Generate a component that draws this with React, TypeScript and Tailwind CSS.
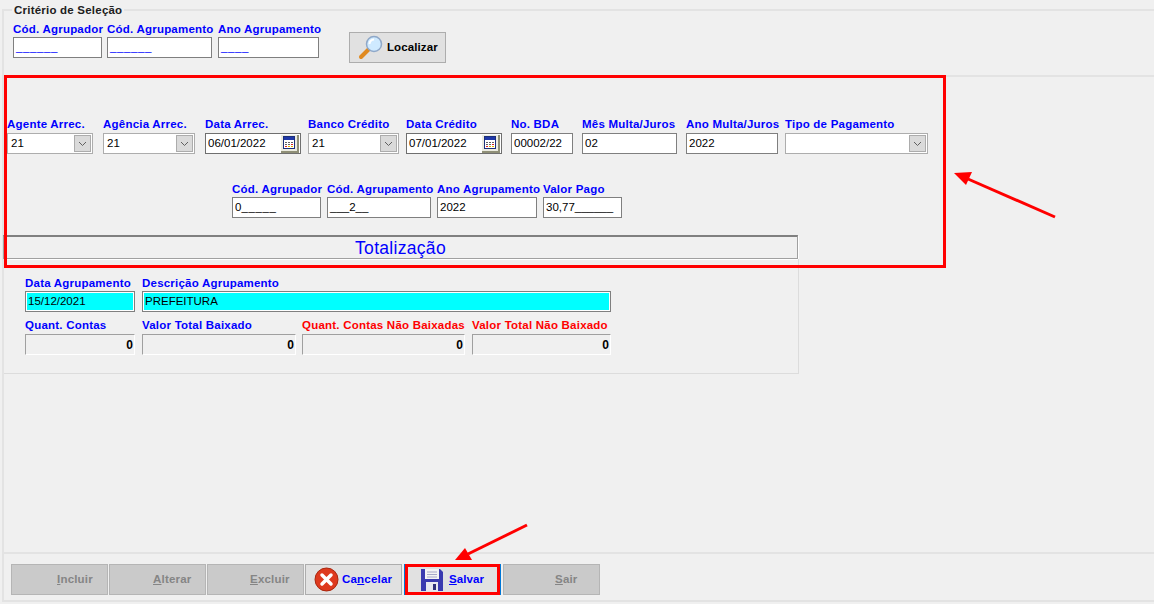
const uiFont = "font-['Liberation_Sans',Arial,sans-serif]"

function Field({ label, className, gap = "gap-px", labelColor = "text-[#0000ff]", children }: { label: string; className: string; gap?: string; labelColor?: string; children: React.ReactNode }) {
    return (
        <div className={`flex flex-col ${gap} ${className}`}>
            <span className={`h-[14px] whitespace-nowrap text-[11.5px] leading-[14px] font-bold tracking-[0.22px] ${labelColor}`}>{label}</span>
            {children}
        </div>
    )
}

function TextBox({ value, mask }: { value?: string; mask?: string }) {
    return (
        <div className="flex h-[21px] items-center border border-[#7f7f7f] bg-white px-[2px] text-[11.5px] text-black whitespace-nowrap">
            {value}
            {mask && <span className={`tracking-[0.6px] ${value === undefined ? "text-[#0000ff]" : ""}`}>{mask}</span>}
        </div>
    )
}

function Combo({ value }: { value?: string }) {
    return (
        <div className="flex h-[21px] items-center justify-between border border-[#adadad] bg-white pl-[3px] pr-px text-[11.5px] text-black">
            <span>{value}</span>
            <span className="flex h-[17px] w-[17px] items-center justify-center border border-[#acacac] bg-[#dadada]">
                <svg width="9" height="6" viewBox="0 0 9 6" fill="none"><path d="M1 1l3.5 3.5L8 1" stroke="#606060" strokeWidth="1" /></svg>
            </span>
        </div>
    )
}

function DateBox({ value }: { value: string }) {
    return (
        <div className="flex h-[21px] items-center justify-between border border-[#6f6f6f] bg-white pl-[2px] pr-[1px] text-[11.5px] text-black">
            <span>{value}</span>
            <span className="flex h-[18px] w-[18px] items-center justify-center border-r-2 border-b-2 border-[#909078] bg-[#ecece0]">
                <svg width="12" height="13" viewBox="0 0 12 13">
                    <rect x="0.5" y="0.5" width="11" height="12" fill="#fff" stroke="#1c2f7a" />
                    <rect x="1" y="1" width="10" height="3" fill="#2038a8" />
                    <path d="M2 6h2v1H2zM5 6h2v1H5zM8 6h2v1H8zM2 8h2v1H2zM5 8h2v1H5z" fill="#606060" />
                    <path d="M8 8h2v1H8zM2 10h2v1H2z" fill="#e02020" />
                    <path d="M5 10h2v1H5zM8 10h2v1H8z" fill="#e0b000" />
                </svg>
            </span>
        </div>
    )
}

function CyanBox({ value }: { value: string }) {
    return (
        <div className="h-[21px] border border-[#7f7f7f] bg-white p-px">
            <div className="flex h-full items-center bg-[#00ffff] px-px text-[11.5px] text-black">{value}</div>
        </div>
    )
}

function TotalBox() {
    return (
        <div className="flex h-[21px] items-center justify-end border border-t-[#a0a0a0] border-l-[#a0a0a0] border-b-white border-r-white pr-px text-[12px] font-bold text-black">
            0
        </div>
    )
}

function ActionButton({ text, hot, after, className, disabled, children }: { text?: string; hot: string; after: string; className: string; disabled?: boolean; children?: React.ReactNode }) {
    return (
        <div className={`flex h-[31px] items-center border text-[11.5px] font-bold tracking-[0.2px] ${disabled ? "border-[#b5b5b5] bg-[#cacaca] text-[#858585]" : "border-[#adadad] bg-[#e1e1e1] text-[#0000ff]"} ${className}`}>
            {children}
            <span>{text}<span className="underline">{hot}</span>{after}</span>
        </div>
    )
}

export default function App() {
    return (
        <div className={`relative flex h-[604px] w-[1154px] flex-col overflow-hidden bg-[#f0f0f0] pb-[2px] pl-[2px] ${uiFont}`}>
            <div className="relative mt-[9px] flex h-[68px] shrink-0 border-t-2 border-b-2 border-l-2 border-[#e3e3e3] pt-[11px]">
                <span className="absolute -top-[8px] left-[8px] bg-[#f0f0f0] px-[2px] text-[11.5px] leading-[14px] font-bold tracking-[0.22px] text-[#202020]">Critério de Seleção</span>
                <Field label="Cód. Agrupador" className="ml-[9px] h-[36px] w-[89px]"><TextBox mask="______" /></Field>
                <Field label="Cód. Agrupamento" className="ml-[5px] h-[36px] w-[105px]"><TextBox mask="______" /></Field>
                <Field label="Ano Agrupamento" className="ml-[6px] h-[36px] w-[101px]"><TextBox mask="____" /></Field>
                <div className="mt-[10px] ml-[30px] flex h-[31px] w-[97px] items-center gap-[3px] border border-[#adadad] bg-[#e1e1e1] pl-[8px] text-[11.5px] font-bold tracking-[0.1px] text-black">
                    <svg width="26" height="25" viewBox="0 0 26 25">
                        <path d="M3 22l8-8" stroke="#e08a20" strokeWidth="4" strokeLinecap="round" />
                        <circle cx="16" cy="9" r="7.5" fill="#cfeaff" stroke="#8fa8c8" strokeWidth="1.5" />
                        <path d="M11.5 9a4.5 4.5 0 0 1 4.5-4.5" stroke="#fff" strokeWidth="2" fill="none" />
                    </svg>
                    <span>Localizar</span>
                </div>
            </div>

            <div className="flex min-h-0 flex-1 flex-col border-l-2 border-[#e3e3e3] pt-[40px]">
                <div className="flex h-[37px] shrink-0">
                    <Field label="Agente Arrec." gap="gap-[2px]" className="ml-[3px] w-[86px]"><Combo value="21" /></Field>
                    <Field label="Agência Arrec." gap="gap-[2px]" className="ml-[10px] w-[92px]"><Combo value="21" /></Field>
                    <Field label="Data Arrec." gap="gap-[2px]" className="ml-[10px] w-[96px]"><DateBox value="06/01/2022" /></Field>
                    <Field label="Banco Crédito" gap="gap-[2px]" className="ml-[7px] w-[91px]"><Combo value="21" /></Field>
                    <Field label="Data Crédito" gap="gap-[2px]" className="ml-[7px] w-[96px]"><DateBox value="07/01/2022" /></Field>
                    <Field label="No. BDA" gap="gap-[2px]" className="ml-[9px] w-[62px]"><TextBox value="00002/22" /></Field>
                    <Field label="Mês Multa/Juros" gap="gap-[2px]" className="ml-[9px] w-[95px]"><TextBox value="02" /></Field>
                    <Field label="Ano Multa/Juros" gap="gap-[2px]" className="ml-[9px] w-[92px]"><TextBox value="2022" /></Field>
                    <Field label="Tipo de Pagamento" gap="gap-[2px]" className="ml-[7px] w-[143px]"><Combo /></Field>
                </div>

                <div className="mt-[28px] flex h-[36px] shrink-0">
                    <Field label="Cód. Agrupador" className="ml-[228px] w-[89px]"><TextBox value="0" mask="_____" /></Field>
                    <Field label="Cód. Agrupamento" className="ml-[6px] w-[104px]"><TextBox value="___2__" /></Field>
                    <Field label="Ano Agrupamento" className="ml-[6px] w-[100px]"><TextBox value="2022" /></Field>
                    <Field label="Valor Pago" className="ml-[6px] w-[79px]"><TextBox value="30,77______" /></Field>
                </div>

                <div className="mt-[17px] -ml-px flex h-[24px] w-[795px] shrink-0 items-center justify-center border border-[#a0a0a0] border-t-2 border-t-[#808080] pt-[2px] text-[17.500px] leading-none tracking-[0.3px] text-[#0000ff] shadow-[1px_1px_0_#fff]">
                    Totalização
                </div>

                <div className="flex h-[115px] w-[795px] shrink-0 flex-col border-r border-b border-[#dcdcdc] pt-[17px] pl-[21px]">
                    <div className="flex h-[36px]">
                        <Field label="Data Agrupamento" className="w-[110px]"><CyanBox value="15/12/2021" /></Field>
                        <Field label="Descrição Agrupamento" className="ml-[7px] w-[469px]"><CyanBox value="PREFEITURA" /></Field>
                    </div>
                    <div className="mt-[6px] flex h-[37px]">
                        <Field label="Quant. Contas" gap="gap-[2px]" className="w-[110px]"><TotalBox /></Field>
                        <Field label="Valor Total Baixado" gap="gap-[2px]" className="ml-[7px] w-[154px]"><TotalBox /></Field>
                        <Field label="Quant. Contas Não Baixadas" gap="gap-[2px]" labelColor="text-[#ff0000]" className="ml-[6px] w-[163px]"><TotalBox /></Field>
                        <Field label="Valor Total Não Baixado" gap="gap-[2px]" labelColor="text-[#ff0000]" className="ml-[7px] w-[139px]"><TotalBox /></Field>
                    </div>
                </div>
            </div>

            <div className="flex h-[50px] shrink-0 gap-px border-y-2 border-l-2 border-[#e3e3e3] pt-[10px] pl-[7px]">
                <ActionButton hot="I" after="ncluir" disabled className="w-[97px] pl-[45px]" />
                <ActionButton hot="A" after="lterar" disabled className="w-[97px] pl-[43px]" />
                <ActionButton hot="E" after="xcluir" disabled className="w-[97px] pl-[42px]" />
                <ActionButton text="Ca" hot="n" after="celar" className="w-[97px] gap-[3px] pl-[8px]">
                    <svg width="25" height="25" viewBox="0 0 25 25">
                        <circle cx="12.5" cy="12.5" r="11.5" fill="#de3a1e" stroke="#a82810" />
                        <path d="M8 8l9 9M17 8l-9 9" stroke="#fff" strokeWidth="3.5" strokeLinecap="round" />
                    </svg>
                </ActionButton>
                <div className="ml-px flex h-[31px] w-[97px] border-x border-[#0078d7]">
                    <div className="flex flex-1 items-center gap-[6px] border-[3px] border-[#ff0000] bg-[#e1e1e1] pl-[13px] text-[11.5px] font-bold tracking-[0.1px] text-[#0000ff]">
                        <svg width="22" height="23" viewBox="0 0 22 23">
                            <path d="M0 1h19l3 3v19H0z" fill="#3a3ab0" />
                            <rect x="4" y="1" width="14" height="10" fill="#f4f4f4" />
                            <path d="M6 4h10M6 6.500h10M6 9h10" stroke="#a8a8c8" />
                            <rect x="5" y="14" width="12" height="9" fill="#e8e8f0" />
                            <rect x="12" y="16" width="3" height="6" fill="#30307a" />
                        </svg>
                        <span><span className="underline">S</span>alvar</span>
                    </div>
                </div>
                <ActionButton hot="S" after="air" disabled className="ml-px w-[97px] pl-[51px]" />
            </div>

            {/* marcações vermelhas por cima da tela */}
            <div className="pointer-events-none absolute top-[75px] left-[4px] h-[193px] w-[942px] border-[3px] border-[#ff0000]" />
            <svg className="pointer-events-none absolute inset-0" width="1154" height="604" viewBox="0 0 1154 604">
                <path d="M1055 217L968 179" stroke="#ff0000" strokeWidth="3" />
                <path d="M954 173l18-1-6 13z" fill="#ff0000" />
                <path d="M527 525L468 554" stroke="#ff0000" strokeWidth="3" />
                <path d="M455 560l10-12 7 12z" fill="#ff0000" />
            </svg>
        </div>
    )
}
